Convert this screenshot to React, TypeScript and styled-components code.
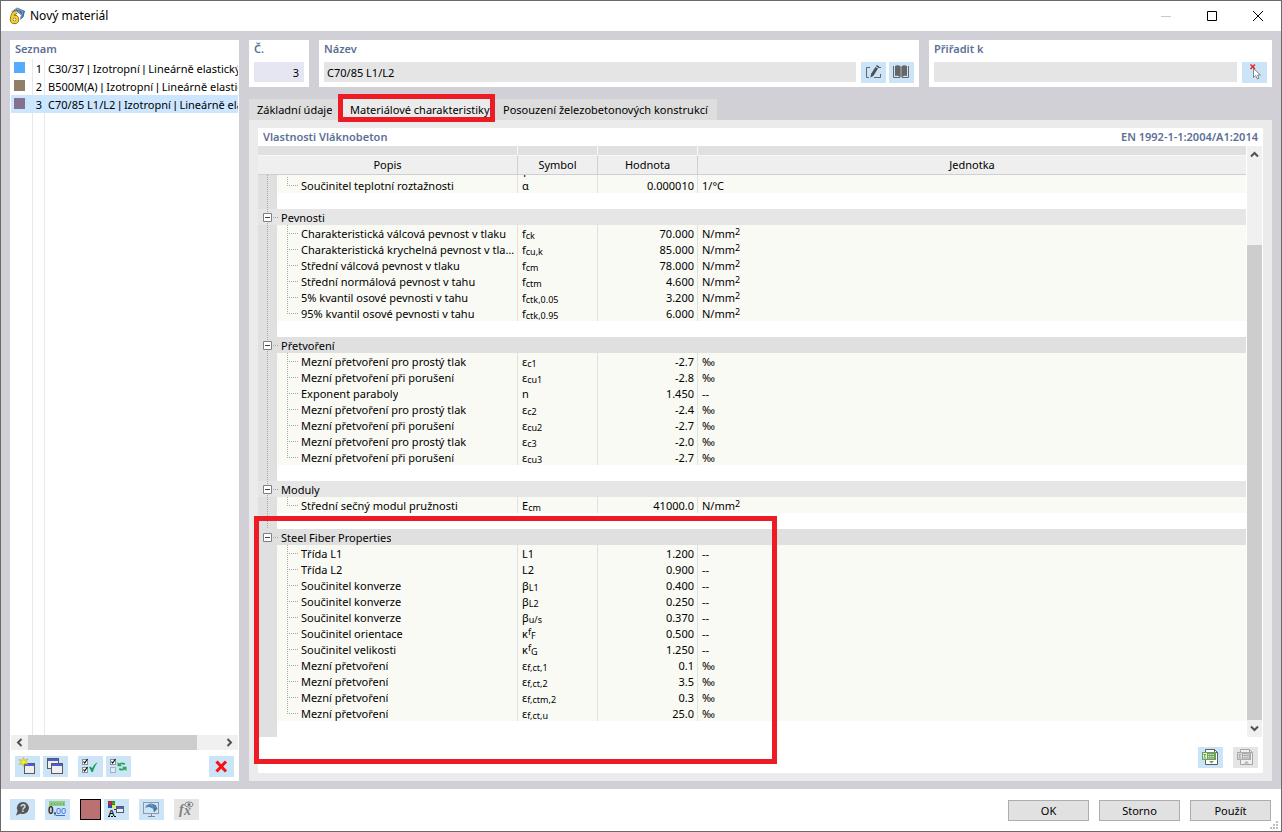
import React from "react";
import styled, { createGlobalStyle, css } from "styled-components";

const GlobalStyle = createGlobalStyle`
  *, *::before, *::after { box-sizing: border-box; }
  body {
    margin: 0;
    background: #ffffff;
    color: #000000;
    font: 11px/16px "Noto Sans", "Open Sans", sans-serif;
  }
  button, input { font: inherit; color: inherit; }
`;

const Dialog = styled.div`
  display: flex;
  flex-direction: column;
  min-height: 100vh;
  border: 1px solid #6b6a6b;
  background: #ffffff;
`;

/* ---------- title bar ---------- */

const TitleBar = styled.header`
  display: flex;
  align-items: center;
  height: 30px;
  padding-left: 7px;
`;

const Title = styled.h1`
  flex: 1;
  margin: 0 0 0 4px;
  font-size: 12px;
  font-weight: 400;
`;

const WindowButton = styled.button<{ $faded?: boolean }>`
  display: grid;
  place-items: center;
  width: 46px;
  height: 30px;
  padding: 0;
  border: 0;
  background: transparent;
  color: ${(p) => (p.$faded ? "#c8c8c8" : "#000000")};
`;

/* ---------- general parts ---------- */

const Workspace = styled.main`
  display: flex;
  flex: 1;
  gap: 10px;
  padding: 9px 9px 8px;
  background: #d1d0d6;
`;

const IconButton = styled.button<{ $off?: boolean }>`
  flex: none;
  width: 25px;
  height: 21px;
  padding: 0;
  border: 0;
  background: ${(p) => (p.$off ? "#e5e5e5" : "#cce4f7")};
  svg { display: block; }
`;

const ButtonGroup = styled.div`
  display: flex;
  gap: 3px;
`;

const headingText = css`
  color: #5d6f96;
  font-size: 11px;
  font-weight: 600;
`;

const PanelTitle = styled.h2`
  ${headingText}
  height: 19px;
  margin: 0;
  padding: 1px 5px 0;
`;

/* ---------- material list ---------- */

const ListPanel = styled.section`
  display: flex;
  flex-direction: column;
  flex: none;
  width: 229px;
  background: #ffffff;
`;

const MaterialList = styled.ul`
  flex: 1;
  margin: 0 1px;
  padding: 0;
  overflow: hidden;
  list-style: none;
  background:
    linear-gradient(#e8e8e8, #e8e8e8) 21px 0 / 1px 100% no-repeat,
    linear-gradient(#e8e8e8, #e8e8e8) 33px 0 / 1px 100% no-repeat;
`;

const MaterialItem = styled.li<{ $selected?: boolean }>`
  display: flex;
  height: 18px;
  padding-left: 3px;
  line-height: 20px;
  white-space: nowrap;
  background: ${(p) => (p.$selected ? "#cce6ff" : "transparent")};
`;

const Swatch = styled.span<{ $color: string }>`
  flex: none;
  width: 11px;
  height: 11px;
  margin-top: 3px;
  background: ${(p) => p.$color};
`;

const MaterialNumber = styled.span`
  flex: none;
  width: 17px;
  margin-right: 6px;
  text-align: right;
`;

const Bar = styled.span`
  font-family: "Liberation Sans", sans-serif;
  line-height: 0;
`;

const HorizontalScroll = styled.div`
  display: flex;
  height: 15px;
  margin: 0 1px 6px;
  background: #f0f0f0;
`;

const ScrollArrow = styled.button`
  display: grid;
  flex: none;
  place-items: center;
  width: 17px;
  height: 15px;
  padding: 0;
  border: 0;
  background: transparent;
  color: #505050;
`;

const ScrollSpace = styled.span<{ $size: number }>`
  flex: ${(p) => p.$size} 1 0;
`;

const ScrollThumb = styled.span<{ $size: number }>`
  flex: ${(p) => p.$size} 1 0;
  background: #cdcdcd;
`;

const ListTools = styled.div`
  display: flex;
  gap: 10px;
  padding: 0 5px 4px;
  > :last-child { margin-left: auto; }
`;

/* ---------- header fields ---------- */

const Content = styled.div`
  display: flex;
  flex: 1;
  flex-direction: column;
  min-width: 0;
`;

const FieldRow = styled.div`
  display: grid;
  grid-template-columns: 60px minmax(0, 600fr) minmax(0, 343fr);
  gap: 10px;
`;

const FieldPanel = styled.div`
  height: 47px;
  padding: 0 5px;
  background: #ffffff;
`;

const FieldLabel = styled.label`
  ${headingText}
  display: block;
  height: 22px;
  padding-top: 1px;
`;

const FieldLine = styled.div`
  display: flex;
  gap: 5px;
`;

const TextField = styled.input<{ $tint?: string; $right?: boolean }>`
  flex: 1;
  min-width: 0;
  height: 20px;
  padding: 1px 5px 0 3px;
  border: 0;
  outline: 0;
  border-radius: 0;
  background: ${(p) => p.$tint || "#e5e5e5"};
  text-align: ${(p) => (p.$right ? "right" : "left")};
`;

/* ---------- tabs ---------- */

const TabList = styled.div`
  display: grid;
  grid-template-columns: 92px 154px 222px;
  align-items: end;
  height: 33px;
`;

const Tab = styled.button<{ $active?: boolean }>`
  position: relative;
  height: ${(p) => (p.$active ? 23 : 21)}px;
  padding: ${(p) => (p.$active ? "2px 0 0 9px" : "0 0 0 8px")};
  border: 0;
  background: ${(p) => (p.$active ? "#ebebeb" : "#dddddd")};
  text-align: left;
  white-space: nowrap;
`;

const TabMark = styled.span`
  position: absolute;
  inset: -3px 0 -2px -3px;
  border: 5px solid #ed1c24;
  pointer-events: none;
`;

const TabPanel = styled.section`
  display: flex;
  flex: 1;
  flex-direction: column;
  padding: 8px 9px;
  background: #ebebeb;
`;

const Sheet = styled.div`
  display: flex;
  flex: 1;
  flex-direction: column;
  background: #ffffff;
`;

const SheetHeader = styled.div`
  ${headingText}
  display: flex;
  justify-content: space-between;
  height: 18px;
  padding: 1px 5px 0;
`;

const SheetTools = styled.div`
  display: flex;
  gap: 10px;
  justify-content: flex-end;
  margin-top: auto;
  padding: 0 5px 5px;
`;

/* ---------- property table ---------- */

const TableArea = styled.div`
  position: relative;
  display: flex;
  gap: 1px;
  padding-right: 1px;
`;

const PropertyTable = styled.table`
  flex: 1;
  align-self: flex-start;
  width: 100%;
  min-width: 0;
  border-spacing: 0;
  table-layout: fixed;
  th, td { padding: 0; }
`;

const BandCell = styled.td`
  height: 9px;
  background: #e0e0e0;
  border-right: 1px solid #f8f8f8;
  &:last-child { border-right: 0; }
`;

const HeadCell = styled.th`
  height: 20px;
  border-top: 1px solid #f8f8f8;
  border-right: 1px solid #d0d0d0;
  border-bottom: 1px solid #cfcfcf;
  background: #efefef;
  font-weight: 400;
  &:last-child { border-right: 0; }
`;

const dottedLine = css`
  background-image: linear-gradient(#a8a8a8 50%, transparent 0);
  background-position: 9px 0;
  background-repeat: repeat-y;
  background-size: 1px 2px;
`;

const GutterCell = styled.td<{ $line?: boolean }>`
  background-color: #e0e0e0;
  ${(p) => p.$line && dottedLine}
`;

const GroupCell = styled.th<{ $shade: string; $line?: boolean }>`
  height: 16px;
  background-color: ${(p) => p.$shade};
  font-weight: 400;
  text-align: left;
  ${(p) => p.$line && dottedLine}
`;

const GroupLine = styled.div`
  display: flex;
  align-items: center;
  height: 16px;
  padding-left: 5px;
  line-height: 16px;
`;

const Toggle = styled.button`
  width: 9px;
  height: 9px;
  padding: 0;
  border: 0;
  background: #ffffff;
  svg { display: block; }
`;

const Arm = styled.span<{ $width: number }>`
  flex: none;
  width: ${(p) => p.$width}px;
  height: 1px;
  margin-right: 3px;
  background: repeating-linear-gradient(90deg, transparent 0 1px, #a8a8a8 1px 2px);
`;

const Stem = styled.span<{ $last?: boolean }>`
  flex: none;
  align-self: flex-start;
  width: 1px;
  height: ${(p) => (p.$last ? 9 : 16)}px;
  background: repeating-linear-gradient(#a8a8a8 0 1px, transparent 1px 2px);
`;

const Name = styled.span`
  height: 16px;
  overflow: hidden;
  line-height: 18px;
  text-overflow: ellipsis;
  white-space: nowrap;
`;

const DataCell = styled.td<{ $number?: boolean }>`
  border-right: 1px solid #e0e0e0;
  background: #f9faf4;
  text-align: ${(p) => (p.$number ? "right" : "left")};
  white-space: nowrap;
  &:last-child { border-right: 0; }
`;

const DataLine = styled.div`
  height: 16px;
  padding: 0 3px 0 4px;
  line-height: 18px;
  sub, sup { font-size: 9px; line-height: 0; }
  sub { vertical-align: -1px; }
  sup { vertical-align: 3px; }
`;

const NameCell = styled.td`
  border-right: 1px solid #e0e0e0;
  background: #f9faf4;
`;

const NameLine = styled.div`
  display: flex;
  align-items: center;
  height: 16px;
  padding: 0 0 0 10px;
`;

const SpacerCell = styled.td`
  height: 16px;
  background: #ffffff;
`;

const ClippedLine = styled.div`
  display: flex;
  align-items: flex-end;
  height: 2px;
  padding-left: 4px;
  overflow: hidden;
  line-height: 12px;
`;

const VerticalScroll = styled.div`
  display: flex;
  flex: none;
  flex-direction: column;
  width: 15px;
  background: #f0f0f0;
  button { width: 15px; height: 17px; }
`;

const SectionMark = styled.div`
  position: absolute;
  top: 370px;
  left: -4px;
  width: 523px;
  height: 248px;
  border: 5px solid #ed1c24;
  pointer-events: none;
`;

/* ---------- footer ---------- */

const Footer = styled.footer`
  display: flex;
  align-items: flex-start;
  justify-content: space-between;
  height: 42px;
  padding: 10px 0 0 9px;
`;

const FooterTools = styled.div`
  display: flex;
  gap: 10px;
`;

const ColorButton = styled.button`
  width: 21px;
  height: 21px;
  padding: 0;
  border: 1px solid #000000;
  background: #bb7072;
`;

const DialogButtons = styled.div`
  display: flex;
  gap: 10px;
  padding: 1px 10px 0 0;
`;

const PushButton = styled.button`
  width: 81px;
  height: 21px;
  padding: 0;
  border: 1px solid #adadad;
  background: #e1e1e1;
`;

const Grip = styled.svg`
  position: absolute;
  right: 3px;
  bottom: 2px;
`;

const FooterEnd = styled.div`
  position: relative;
  height: 32px;
`;

/* ---------- icons ---------- */

const Icon = ({ children }: { children: React.ReactNode }) => (
  <svg width="25" height="21" viewBox="0 0 25 21" fill="none" aria-hidden="true">
    {children}
  </svg>
);

const MiniWindow = ({ x, y, w = 11, h = 11 }: { x: number; y: number; w?: number; h?: number }) => (
  <g>
    <rect x={x + 0.5} y={y + 0.5} width={w - 1} height={h - 1} fill="#f0eeee" stroke="#5a5a5a" />
    <rect x={x + 1} y={y + 1} width={w - 2} height="2" fill="#4a5ce6" />
  </g>
);

const AppLogo = () => (
  <svg width="18" height="18" viewBox="0 0 18 18" aria-hidden="true">
    <path d="M3 5 9 0.5 17 4 15.500 10 12 13 13 8 8 4Z" fill="#3f6a9c" />
    <path d="M4 4.500 9 1.500 15 4.500M9 1.500 13 8M15 4.500 13 10" stroke="#9db7d2" strokeWidth="0.8" fill="none" />
    <path d="M9 5C5.500 5.500 4 8 4 11.500" fill="none" stroke="#5c4a10" strokeWidth="3.600" />
    <circle cx="6.500" cy="12.500" r="3" fill="none" stroke="#5c4a10" strokeWidth="3.400" />
    <path d="M9 5C5.500 5.500 4 8 4 11.500" fill="none" stroke="#f4cd2d" strokeWidth="2.400" />
    <circle cx="6.500" cy="12.500" r="2.900" fill="none" stroke="#f4cd2d" strokeWidth="2.300" />
  </svg>
);

const Chevron = ({ d }: { d: string }) => (
  <svg width="9" height="9" viewBox="0 0 9 9" fill="none" stroke="currentColor" strokeWidth="2" aria-hidden="true">
    <path d={d} />
  </svg>
);

const Tick = ({ y }: { y: number }) => (
  <g>
    <rect x="4.500" y={y + 0.5} width="5" height="5" stroke="#8a9298" fill="#fff" />
    <path d={`M5.500 ${y + 2.500}l1.200 1.500L9.500 ${y}`} stroke="#111" strokeWidth="1.200" />
  </g>
);

const NewIcon = () => (
  <Icon>
    <MiniWindow x={9} y={7} />
    <path d="M8.500 1.500 9.600 4.400 13 3 10.800 6 13 8.500 9.600 7.600 8.500 10.500 7.400 7.600 4 8.500 6.200 6 4 3.500 7.400 4.400Z" fill="#f8f020" stroke="#a89c30" strokeWidth="0.500" />
  </Icon>
);
const CopyIcon = () => (
  <Icon>
    <MiniWindow x={4} y={2} w={12} />
    <MiniWindow x={8} y={7} w={12} />
  </Icon>
);
const CheckAllIcon = () => (
  <Icon>
    <Tick y={3} />
    <Tick y={11} />
    <path d="M11 11.500 12.800 10.500 14 12.500C15.500 9.500 17 7.500 19.800 6 17.500 9 16 12 14.800 16H13.500C12.800 14 12 12.500 11 11.500Z" fill="#12a04a" />
  </Icon>
);
const InvertIcon = () => (
  <Icon>
    <Tick y={3} />
    <rect x="4.500" y="11.500" width="5" height="5" stroke="#a8b2ba" fill="#dcecf8" />
    <path d="M13 8.800C14.500 7 16.500 7 18.800 8.300M19 12.200C17.500 14 15.500 14 13.200 12.900" stroke="#28a552" strokeWidth="1.800" />
    <path d="M11.500 6v4.200h4.500zM20.500 15v-4.200H16z" fill="#28a552" />
  </Icon>
);
const DeleteIcon = () => (
  <Icon>
    <path d="M7.500 5.500 17 15.500M17 5.500 7.500 15.500" stroke="#fa0f0f" strokeWidth="3" />
  </Icon>
);
const HelpIcon = () => (
  <Icon>
    <path d="M13 3a6 6 0 1 1-2.500 11.500L6 16.500 7.600 12A6 6 0 0 1 13 3Z" fill="#555" />
    <text x="13" y="13" textAnchor="middle" fontFamily="Liberation Sans" fontWeight="700" fontSize="10" fill="#cce4f7">?</text>
  </Icon>
);
const UnitsIcon = () => (
  <Icon>
    <rect x="4" y="2" width="16" height="5" fill="#91cc86" />
    <path d="M6.500 4v2M9.500 4v2M12.500 4v2M15.500 4v2M18.500 4v2" stroke="#6cad64" />
    <text x="3" y="15" fontFamily="Liberation Sans" fontWeight="700" fontSize="10" fill="#222">0,</text>
    <text x="11" y="15" fontFamily="Liberation Sans" fontSize="9" fill="#3a6fd8">00</text>
    <path d="M11 16.500h9" stroke="#3a6fd8" />
  </Icon>
);
const DisplayIcon = () => (
  <Icon>
    <rect x="4" y="2" width="7" height="7" fill="#444" />
    <path d="M4.500 2.500h3v3h-3z" fill="#f02020" />
    <path d="M8 2.500h3v3H8z" fill="#22b022" />
    <path d="M4.500 6h3v3h-3z" fill="#2848e8" />
    <path d="M8 6h3v3H8z" fill="#f6e728" />
    <text x="7.500" y="17" textAnchor="middle" fontFamily="Liberation Sans" fontWeight="700" fontSize="9" fill="#111">A</text>
    <path d="M4 17.500h2M7 17.500h2M10 17.500h2" stroke="#111" />
    <path d="M10 10.500h2" stroke="#333" />
    <MiniWindow x={12} y={7} w={8} h={7} />
  </Icon>
);
const MonitorIcon = () => (
  <Icon>
    <rect x="4.500" y="3.500" width="15" height="11" stroke="#8c9aa5" fill="#d0e6f7" />
    <path d="M12.500 15v2.500M9 17.500h7" stroke="#7b8790" />
    <path d="M6 8.500 8 6 12 4.500 16.500 6 18.500 9.500 15 13.500 14 9.500 10.500 8Z" fill="#3e75a5" />
    <path d="M7 8.500 12 5.500 17 9M12 5.500 15 12" stroke="#8db4d4" strokeWidth="0.600" />
  </Icon>
);
const FormulaIcon = () => (
  <Icon>
    <text x="5" y="15" fontFamily="Liberation Serif" fontStyle="italic" fontWeight="700" fontSize="14" fill="#808080">f</text>
    <text x="10" y="16" fontFamily="Liberation Serif" fontStyle="italic" fontWeight="700" fontSize="14" fill="#808080">x</text>
    <ellipse cx="15" cy="5.500" rx="4" ry="2.600" stroke="#888" />
    <circle cx="15" cy="5.500" r="1.500" fill="#777" />
  </Icon>
);
const EditIcon = () => (
  <Icon>
    <path d="M9 5.500H5.500v10H8M13 15.500h6.500V12M17 5.500h3" stroke="#666" />
    <path d="M9.500 15.500 10 12l4.500-7 2.500 1.500-4.500 7.200Z" fill="#505050" />
    <path d="M15 4.200 15.800 3l2.400 1.500-.8 1.200Z" fill="#505050" />
  </Icon>
);
const BookIcon = () => (
  <Icon>
    <path d="M6 4C8 2.800 10 2.800 11.700 4.500v11C10 14 8 13.500 6 14ZM18 4C16 2.800 14 2.800 12.300 4.500v11C14 14 16 13.500 18 14Z" fill="#666" />
    <path d="M4.500 4v11.500H11M13 15.500h6.500V4" stroke="#666" />
  </Icon>
);
const PickIcon = () => (
  <Icon>
    <path d="M8.500 2.500 13 7M13 2.500 8.500 7" stroke="#ee2020" strokeWidth="1.500" />
    <path d="M11.500 6.500v9l2.200-2 1.800 3.500 1.600-.8L15.500 13h3Z" fill="#fff" stroke="#858585" />
  </Icon>
);
const SheetIcon = ({ up }: { up?: boolean }) => {
  const frame = up ? "#a5a5a5" : "#5a5f5a";
  const grid = up ? "#acacac" : "#6ea057";
  return (
    <Icon>
      <path d="M7.500 2.500h9l3 3v12h-12Z" fill={up ? "#f0f0f0" : "#fff"} stroke={frame} />
      <path d="M16.500 2.500v3h3" stroke={frame} />
      <rect x="4.500" y="5.500" width="13" height="7" fill={up ? "#dadada" : "#e3f0da"} stroke={grid} />
      <rect x="9" y="6" width="8" height="6" fill={grid} />
      <path d="M10 7.500h6M10 9.500h6M10 11h6" stroke="#fff" strokeWidth="0.700" strokeDasharray="1.500 0.700" />
      <path d="M5.500 7.500h2.500M5.500 11h2.500M6.700 7.500v3" stroke={grid} />
      <path d={up ? "M11 16.500h5L13.500 14Z" : "M11 14h5l-2.500 2.500Z"} fill={grid} />
    </Icon>
  );
};

/* ---------- data ---------- */

const materials = [
  { id: 1, color: "#56aaff", parts: ["C30/37", "Izotropní", "Lineárně elastický"] },
  { id: 2, color: "#8f7f68", parts: ["B500M(A)", "Izotropní", "Lineárně elastický"] },
  { id: 3, color: "#84708f", parts: ["C70/85 L1/L2", "Izotropní", "Lineárně elastický"] },
];

type Property = { name: string; symbol: string; sup?: string; sub?: string; value: string; unit: string };
type Group = { title: string; shade: string; rows: Property[] };

const p = (name: string, symbol: string, sub: string, value: string, unit: string, sup?: string): Property => ({
  name, symbol, sub, value, unit, sup,
});

const groups: Group[] = [
  {
    title: "Pevnosti",
    shade: "#e6e6e6",
    rows: [
      p("Charakteristická válcová pevnost v tlaku", "f", "ck", "70.000", "N/mm2"),
      p("Charakteristická krychelná pevnost v tlaku", "f", "cu,k", "85.000", "N/mm2"),
      p("Střední válcová pevnost v tlaku", "f", "cm", "78.000", "N/mm2"),
      p("Střední normálová pevnost v tahu", "f", "ctm", "4.600", "N/mm2"),
      p("5% kvantil osové pevnosti v tahu", "f", "ctk,0.05", "3.200", "N/mm2"),
      p("95% kvantil osové pevnosti v tahu", "f", "ctk,0.95", "6.000", "N/mm2"),
    ],
  },
  {
    title: "Přetvoření",
    shade: "#e0e0e0",
    rows: [
      p("Mezní přetvoření pro prostý tlak", "ε", "c1", "-2.7", "‰"),
      p("Mezní přetvoření při porušení", "ε", "cu1", "-2.8", "‰"),
      p("Exponent paraboly", "n", "", "1.450", "--"),
      p("Mezní přetvoření pro prostý tlak", "ε", "c2", "-2.4", "‰"),
      p("Mezní přetvoření při porušení", "ε", "cu2", "-2.7", "‰"),
      p("Mezní přetvoření pro prostý tlak", "ε", "c3", "-2.0", "‰"),
      p("Mezní přetvoření při porušení", "ε", "cu3", "-2.7", "‰"),
    ],
  },
  {
    title: "Moduly",
    shade: "#e6e6e6",
    rows: [p("Střední sečný modul pružnosti", "E", "cm", "41000.0", "N/mm2")],
  },
  {
    title: "Steel Fiber Properties",
    shade: "#e0e0e0",
    rows: [
      p("Třída L1", "L1", "", "1.200", "--"),
      p("Třída L2", "L2", "", "0.900", "--"),
      p("Součinitel konverze", "β", "L1", "0.400", "--"),
      p("Součinitel konverze", "β", "L2", "0.250", "--"),
      p("Součinitel konverze", "β", "u/s", "0.370", "--"),
      p("Součinitel orientace", "κ", "F", "0.500", "--", "f"),
      p("Součinitel velikosti", "κ", "G", "1.250", "--", "f"),
      p("Mezní přetvoření", "ε", "f,ct,1", "0.1", "‰"),
      p("Mezní přetvoření", "ε", "f,ct,2", "3.5", "‰"),
      p("Mezní přetvoření", "ε", "f,ctm,2", "0.3", "‰"),
      p("Mezní přetvoření", "ε", "f,ct,u", "25.0", "‰"),
    ],
  },
];

const PropertyRow = ({ item, last, line }: { item: Property; last: boolean; line: boolean }) => (
  <tr>
    <GutterCell $line={line} />
    <NameCell>
      <NameLine>
        <Stem $last={last} />
        <Arm $width={10} />
        <Name>{item.name}</Name>
      </NameLine>
    </NameCell>
    <DataCell>
      <DataLine>
        {item.symbol}
        {item.sup && <sup>{item.sup}</sup>}
        {item.sub && <sub>{item.sub}</sub>}
      </DataLine>
    </DataCell>
    <DataCell $number>
      <DataLine>{item.value}</DataLine>
    </DataCell>
    <DataCell>
      <DataLine>{item.unit === "N/mm2" ? <>N/mm<sup>2</sup></> : item.unit}</DataLine>
    </DataCell>
  </tr>
);

const Spacer = ({ line }: { line: boolean }) => (
  <tr>
    <GutterCell $line={line} />
    <SpacerCell colSpan={4} />
  </tr>
);

export default function App() {
  return (
    <>
      <GlobalStyle />
      <Dialog>
        <TitleBar>
          <AppLogo />
          <Title>Nový materiál</Title>
          <WindowButton $faded aria-label="Minimalizovat">
            <svg width="10" height="10" stroke="currentColor"><path d="M0 5.500h10" /></svg>
          </WindowButton>
          <WindowButton aria-label="Maximalizovat">
            <svg width="10" height="10" stroke="currentColor" fill="none"><path d="M.5.5h9v9h-9z" /></svg>
          </WindowButton>
          <WindowButton aria-label="Zavřít">
            <svg width="10" height="10" stroke="currentColor"><path d="M0 0 10 10M10 0 0 10" /></svg>
          </WindowButton>
        </TitleBar>

        <Workspace>
          <ListPanel>
            <PanelTitle>Seznam</PanelTitle>
            <MaterialList>
              {materials.map((m) => (
                <MaterialItem key={m.id} $selected={m.id === 3}>
                  <Swatch $color={m.color} />
                  <MaterialNumber>{m.id}</MaterialNumber>
                  <span>
                    {m.parts[0]} <Bar>|</Bar> {m.parts[1]} <Bar>|</Bar> {m.parts[2]}
                  </span>
                </MaterialItem>
              ))}
            </MaterialList>
            <HorizontalScroll>
              <ScrollArrow aria-label="Doleva"><Chevron d="M6.500 1 3 4.500 6.500 8" /></ScrollArrow>
              <ScrollThumb $size={169} />
              <ScrollSpace $size={24} />
              <ScrollArrow aria-label="Doprava"><Chevron d="M2.500 1 6 4.500 2.500 8" /></ScrollArrow>
            </HorizontalScroll>
            <ListTools>
              <ButtonGroup>
                <IconButton aria-label="Nový"><NewIcon /></IconButton>
                <IconButton aria-label="Kopírovat"><CopyIcon /></IconButton>
              </ButtonGroup>
              <ButtonGroup>
                <IconButton aria-label="Vybrat vše"><CheckAllIcon /></IconButton>
                <IconButton aria-label="Invertovat výběr"><InvertIcon /></IconButton>
              </ButtonGroup>
              <IconButton aria-label="Smazat"><DeleteIcon /></IconButton>
            </ListTools>
          </ListPanel>

          <Content>
            <FieldRow>
              <FieldPanel>
                <FieldLabel htmlFor="number">Č.</FieldLabel>
                <FieldLine>
                  <TextField id="number" $tint="#e6e6f2" $right readOnly value="3" />
                </FieldLine>
              </FieldPanel>
              <FieldPanel>
                <FieldLabel htmlFor="name">Název</FieldLabel>
                <FieldLine>
                  <TextField id="name" readOnly value="C70/85 L1/L2" />
                  <ButtonGroup>
                    <IconButton aria-label="Upravit"><EditIcon /></IconButton>
                    <IconButton aria-label="Knihovna"><BookIcon /></IconButton>
                  </ButtonGroup>
                </FieldLine>
              </FieldPanel>
              <FieldPanel>
                <FieldLabel htmlFor="assign">Přiřadit k</FieldLabel>
                <FieldLine>
                  <TextField id="assign" readOnly value="" />
                  <IconButton aria-label="Vybrat"><PickIcon /></IconButton>
                </FieldLine>
              </FieldPanel>
            </FieldRow>

            <TabList role="tablist">
              <Tab role="tab">Základní údaje</Tab>
              <Tab role="tab" aria-selected $active>
                Materiálové charakteristiky
                <TabMark />
              </Tab>
              <Tab role="tab">Posouzení železobetonových konstrukcí</Tab>
            </TabList>

            <TabPanel>
              <Sheet>
                <SheetHeader>
                  <span>Vlastnosti Vláknobeton</span>
                  <span>EN 1992-1-1:2004/A1:2014</span>
                </SheetHeader>
                <TableArea>
                  <PropertyTable>
                    <colgroup>
                      <col width="19" />
                      <col width="241" />
                      <col width="80" />
                      <col width="100" />
                      <col />
                    </colgroup>
                    <thead>
                      <tr>
                        <BandCell colSpan={2} />
                        <BandCell />
                        <BandCell />
                        <BandCell />
                      </tr>
                      <tr>
                        <HeadCell colSpan={2}>Popis</HeadCell>
                        <HeadCell>Symbol</HeadCell>
                        <HeadCell>Hodnota</HeadCell>
                        <HeadCell>Jednotka</HeadCell>
                      </tr>
                    </thead>
                    <tbody>
                      <tr>
                        <GutterCell $line />
                        <NameCell />
                        <DataCell><ClippedLine>γ</ClippedLine></DataCell>
                        <DataCell />
                        <DataCell />
                      </tr>
                      <PropertyRow
                        item={p("Součinitel teplotní roztažnosti", "α", "", "0.000010", "1/°C")}
                        last
                        line
                      />
                      <Spacer line />
                    </tbody>
                    {groups.map((g, i) => {
                      const line = i < groups.length - 1;
                      return (
                        <tbody key={g.title}>
                          <tr>
                            <GroupCell colSpan={5} $shade={g.shade} $line={line}>
                              <GroupLine>
                                <Toggle aria-label={`Sbalit ${g.title}`}>
                                  <svg width="9" height="9" fill="none">
                                    <path d="M.5.5h8v8h-8z" stroke="#808080" />
                                    <path d="M2 4.500h5" stroke="#444" />
                                  </svg>
                                </Toggle>
                                <Arm $width={6} />
                                <Name>{g.title}</Name>
                              </GroupLine>
                            </GroupCell>
                          </tr>
                          {g.rows.map((item, r) => (
                            <PropertyRow key={r} item={item} last={r === g.rows.length - 1} line={line} />
                          ))}
                          <Spacer line={line} />
                        </tbody>
                      );
                    })}
                  </PropertyTable>
                  <VerticalScroll>
                    <ScrollArrow aria-label="Nahoru"><Chevron d="M1 6.500 4.500 3 8 6.500" /></ScrollArrow>
                    <ScrollSpace $size={82} />
                    <ScrollThumb $size={475} />
                    <ScrollArrow aria-label="Dolů"><Chevron d="M1 2.500 4.500 6 8 2.500" /></ScrollArrow>
                  </VerticalScroll>
                  <SectionMark />
                </TableArea>
                <SheetTools>
                  <IconButton aria-label="Export do tabulky"><SheetIcon /></IconButton>
                  <IconButton $off disabled aria-label="Import z tabulky"><SheetIcon up /></IconButton>
                </SheetTools>
              </Sheet>
            </TabPanel>
          </Content>
        </Workspace>

        <Footer>
          <FooterTools>
            <IconButton aria-label="Nápověda"><HelpIcon /></IconButton>
            <IconButton aria-label="Jednotky"><UnitsIcon /></IconButton>
            <ButtonGroup>
              <ColorButton aria-label="Barva" />
              <IconButton aria-label="Zobrazení"><DisplayIcon /></IconButton>
            </ButtonGroup>
            <IconButton aria-label="Vykreslení"><MonitorIcon /></IconButton>
            <IconButton $off disabled aria-label="Vzorce"><FormulaIcon /></IconButton>
          </FooterTools>
          <FooterEnd>
            <DialogButtons>
              <PushButton>OK</PushButton>
              <PushButton>Storno</PushButton>
              <PushButton>Použít</PushButton>
            </DialogButtons>
            <Grip width="8" height="8" fill="#bfbfbf" aria-hidden="true">
              <path d="M6 0h2v2H6zM3 3h2v2H3zM6 3h2v2H6zM0 6h2v2H0zM3 6h2v2H3zM6 6h2v2H6z" />
            </Grip>
          </FooterEnd>
        </Footer>
      </Dialog>
    </>
  );
}
